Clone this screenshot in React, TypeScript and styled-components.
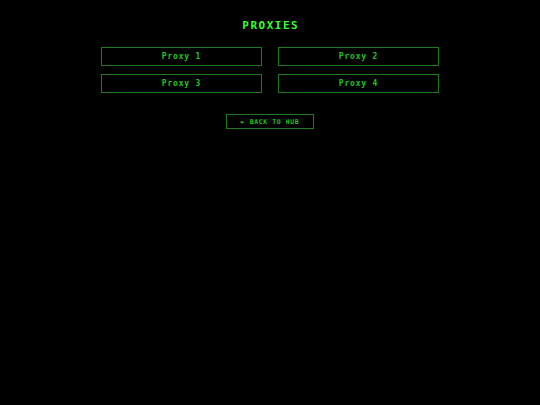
import React from "react";
import styled, { createGlobalStyle } from "styled-components";

const Global = createGlobalStyle`
  html, body { margin: 0; padding: 0; background: #000; }
  body { font-family: "DejaVu Sans Mono", "Liberation Mono", monospace; }
`;

const Page = styled.div`
  display: flex;
  flex-direction: column;
  align-items: center;
  padding-top: 18px;
  min-height: 405px;
  box-sizing: border-box;
  background: #000;
`;

const Title = styled.h1`
  margin: 0;
  font-size: 11px;
  line-height: 15px;
  font-weight: bold;
  letter-spacing: 1.5px;
  color: #33ff33;
  padding-left: 1.5px;
`;

const Grid = styled.div`
  margin-top: 14px;
  display: grid;
  grid-template-columns: 161px 161px;
  column-gap: 16px;
  row-gap: 8px;
`;

const ProxyButton = styled.button`
  height: 19px;
  box-sizing: border-box;
  background: #000;
  border: 1px solid #1f7a1f;
  color: #22c322;
  font-family: "DejaVu Sans Mono", monospace;
  font-weight: bold;
  font-size: 8px;
  letter-spacing: 0.8px;
  padding: 0;
  cursor: pointer;
`;

const BackButton = styled.button`
  margin-top: 21px;
  width: 88px;
  height: 15px;
  box-sizing: border-box;
  background: #000;
  border: 1px solid #1f7a1f;
  color: #22c322;
  font-family: "DejaVu Sans Mono", monospace;
  font-weight: bold;
  font-size: 6.5px;
  letter-spacing: 0.6px;
  padding: 0;
  cursor: pointer;
`;

export default function App() {
  return (
    <>
      <Global />
      <Page>
        <Title>PROXIES</Title>
        <Grid>
          {[1, 2, 3, 4].map((n) => (
            <ProxyButton key={n}>Proxy {n}</ProxyButton>
          ))}
        </Grid>
        <BackButton>► BACK TO HUB</BackButton>
      </Page>
    </>
  );
}
